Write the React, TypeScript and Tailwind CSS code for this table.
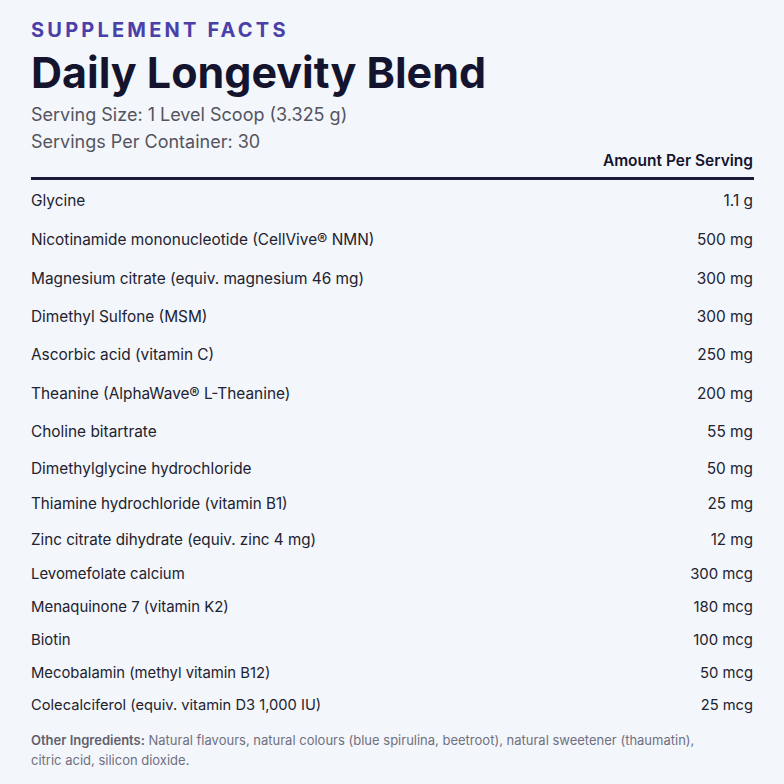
import React from "react";

const rows: [string, string, string][] = [
  ["Glycine", "1.1 g", "h-[38px] text-[15.4px]"],
  ["Nicotinamide mononucleotide (CellVive® NMN)", "500 mg", "h-[39.5px] text-[15.4px]"],
  ["Magnesium citrate (equiv. magnesium 46 mg)", "300 mg", "h-[38.5px] text-[15.4px]"],
  ["Dimethyl Sulfone (MSM)", "300 mg", "h-[38px] text-[15.4px]"],
  ["Ascorbic acid (vitamin C)", "250 mg", "h-[38px] text-[15.4px]"],
  ["Theanine (AlphaWave® L-Theanine)", "200 mg", "h-[39px] text-[15.4px]"],
  ["Choline bitartrate", "55 mg", "h-[37px] text-[15.4px]"],
  ["Dimethylglycine hydrochloride", "50 mg", "h-[36.5px] text-[15.4px]"],
  ["Thiamine hydrochloride (vitamin B1)", "25 mg", "h-[36px] text-[15.2px]"],
  ["Zinc citrate dihydrate (equiv. zinc 4 mg)", "12 mg", "h-[35px] text-[15.2px]"],
  ["Levomefolate calcium", "300 mcg", "h-[33.5px] text-[14.9px]"],
  ["Menaquinone 7 (vitamin K2)", "180 mcg", "h-[33px] text-[14.9px]"],
  ["Biotin", "100 mcg", "h-[33px] text-[14.9px]"],
  ["Mecobalamin (methyl vitamin B12)", "50 mcg", "h-[32.5px] text-[14.8px]"],
  ["Colecalciferol (equiv. vitamin D3 1,000 IU)", "25 mcg", "h-[32px] text-[14.7px]"],
];

export default function App() {
  return (
    <div
      className="w-[784px] h-[784px] bg-[#f3f6fa] px-[31px] pt-[17px] text-[#1c1c2a] overflow-hidden"
      style={{ fontFamily: "Inter, 'Liberation Sans', sans-serif" }}
    >
      <div className="text-[20px] font-bold tracking-[0.16em] text-[#4b40a8] leading-[26px]">
        SUPPLEMENT FACTS
      </div>
      <div className="text-[43px] font-bold text-[#14142e] leading-[50px] mt-[4px]">
        Daily Longevity Blend
      </div>
      <div className="text-[18px] text-[#545460] leading-[27px] mt-[4px]">
        Serving Size: 1 Level Scoop (3.325 g)
      </div>
      <div className="text-[18px] text-[#545460] leading-[27px]">
        Servings Per Container: 30
      </div>
      <div className="flex justify-end mt-[-4px]">
        <span className="text-[15.5px] font-semibold text-[#14142e] leading-[20px]">Amount Per Serving</span>
      </div>
      <div className="h-[3px] bg-[#1a1a3a] mt-[6px] mr-[-1px]" />
      <div className="mt-[2px]">
        {rows.map(([name, amt, h]) => (
          <div key={name} className={`flex items-center justify-between text-[#222230] ${h}`}>
            <span>{name}</span>
            <span>{amt}</span>
          </div>
        ))}
      </div>
      <div className="mt-[8px] text-[13px] leading-[20px] text-[#707080]">
        <span className="font-semibold text-[#60606e]">Other Ingredients:</span> Natural flavours, natural
        colours (blue spirulina, beetroot), natural sweetener (thaumatin),
        <br />
        citric acid, silicon dioxide.
      </div>
    </div>
  );
}
